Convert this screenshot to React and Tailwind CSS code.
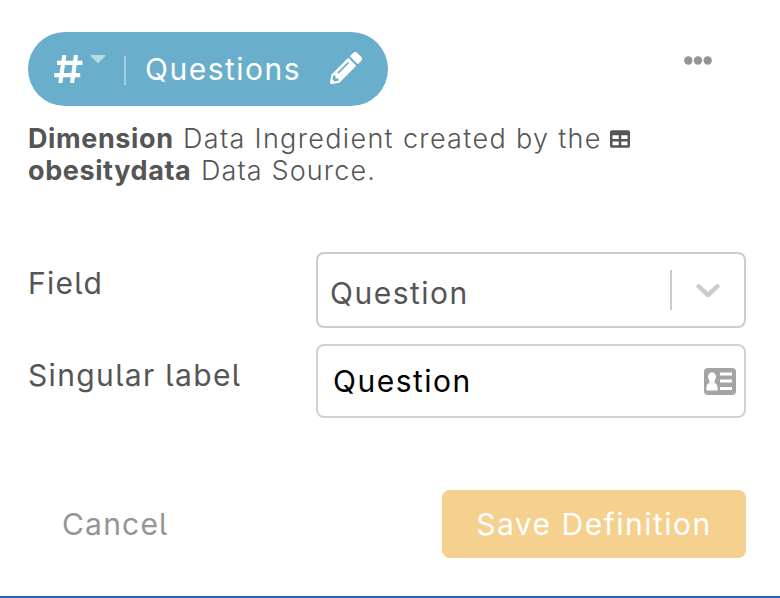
import { FaPencilAlt, FaTable } from "react-icons/fa";

const font = "font-['Inter','Liberation_Sans',sans-serif] [font-feature-settings:'cv05','calt'_0]";

function HashIcon() {
  return (
    <svg className="h-[28px] w-[29px]" viewBox="0 0 29 28" fill="none" stroke="white" strokeWidth="4.1">
      <path d="M3 7.900H28.400M.2 20.100H26.200M10.300 0L6.300 28M22 0L18 28" />
    </svg>
  );
}

function ContactIcon() {
  return (
    <svg className="h-[27px] w-[32px]" viewBox="0 0 32 27">
      <rect width="32" height="27" rx="4" fill="#a4a4a4" />
      <g fill="white">
        <ellipse cx="8" cy="9" rx="4" ry="4.700" />
        <path d="M5.500 12h5v3C13 15.800 13.700 17.500 13.700 22.600H2.300C2.300 17.500 3 15.800 5.500 15Z" />
        <path d="M16 4.500h12v3H16zM16 11.500h12v3H16zM16 19h12v3H16z" />
      </g>
    </svg>
  );
}

export default function App() {
  return (
    <main className={`flex h-[598px] w-[780px] flex-col overflow-hidden border-b-2 border-[#2a62c4] bg-white pl-7 pr-[34px] pt-8 text-[30px] font-normal text-[#555] ${font}`}>
      <header className="flex h-[74px] shrink-0 justify-between">
        <div className="flex w-[360px] items-center rounded-full bg-[#69afcb] pl-[26px] text-white">
          <HashIcon />
          <svg className="mb-[20px] ml-[7px] h-[9px] w-4 shrink-0" viewBox="0 0 16 9" fill="#b9d9e7">
            <path d="M1 0H15Q16 .5 15 1.500L9 7.500Q8 8.500 7 7.500L1 1.500Q0 .5 1 0Z" />
          </svg>
          <span className="ml-[18px] mt-0.5 h-[29px] w-0.5 bg-[#a5cfe0]" />
          <span className="ml-[19px] w-[185px] whitespace-nowrap pt-px tracking-[1.500px]">Questions</span>
          <FaPencilAlt className="-mt-0.5 h-8 w-8 shrink-0" />
        </div>
        <svg className="mr-[34px] mt-[23.500px] h-[9px] w-7" viewBox="0 0 28 9" fill="#959595">
          <circle cx="4.300" cy="4.500" r="4.200" />
          <circle cx="14" cy="4.500" r="4.200" />
          <circle cx="23.700" cy="4.500" r="4.200" />
        </svg>
      </header>

      <section className="mt-[17px] h-[65px] shrink-0 whitespace-nowrap text-[27px] leading-8">
        <div className="flex items-center">
          <strong className="w-[155px] font-bold tracking-[0.600px]">Dimension</strong>
          <span className="w-[427px] font-light tracking-[1.320px]">Data Ingredient created by the</span>
          <FaTable className="h-[22px] w-[20px]" />
        </div>
        <div className="flex">
          <strong className="w-[173px] font-bold tracking-[0.600px]">obesitydata</strong>
          <span className="font-light tracking-[1.120px]">Data Source.</span>
        </div>
      </section>

      <section className="mt-16 flex shrink-0 flex-col gap-4">
        <div className="flex h-[76px]">
          <div className="w-72 pt-[9px] tracking-[1.300px]">Field</div>
          <div className="flex w-[430px] items-center rounded-lg border-2 border-[#ccc] pl-3">
            <span className="w-[340px] pt-[7px] tracking-[1.500px]">Question</span>
            <span className="h-10 w-0.5 bg-[#ccc]" />
            <svg className="ml-6 mt-0.5 h-4 w-6" viewBox="0 0 24 16" fill="none" stroke="#ccc" strokeWidth="4.500" strokeLinecap="round" strokeLinejoin="round">
              <path d="M2.700 3.300L12 12L21.300 3.300" />
            </svg>
          </div>
        </div>
        <div className="flex h-[74px]">
          <div className="w-72 pt-[9px] tracking-[1.350px]">Singular label</div>
          <div className="flex w-[430px] items-center justify-between rounded-lg border-2 border-[#d1d1d1] pl-[15px] pr-2 text-black">
            <span className="pt-px tracking-[1.500px]">Question</span>
            <ContactIcon />
          </div>
        </div>
      </section>

      <footer className="mt-[72px] flex h-[68px] shrink-0 items-center justify-between">
        <button className="ml-[34px] tracking-[1.200px] text-[#959595]">Cancel</button>
        <button className="h-[68px] w-[304px] rounded-lg bg-[#f5d08f] tracking-[1.500px] text-white">Save Definition</button>
      </footer>
    </main>
  );
}
